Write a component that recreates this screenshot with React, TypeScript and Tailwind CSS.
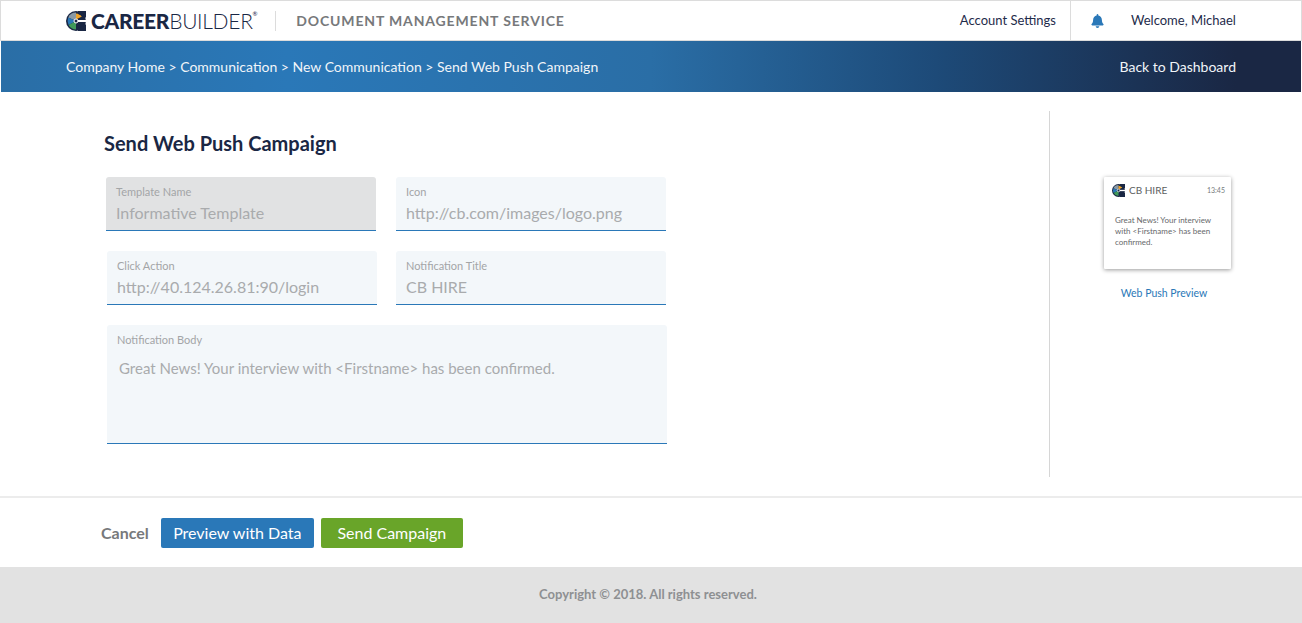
import { ReactNode } from 'react'

function LogoMark({ size }: { size: number }) {
  return (
    <svg width={size} height={size} viewBox="0 0 20 20" className="shrink-0">
      <circle cx="10" cy="10" r="10" fill="#1a2744" />
      <path d="M10 10 L10 1.5 A8.5 8.5 0 0 0 2.2 6.6 Z" fill="#8a9aa5" />
      <path d="M10 10 L2.2 6.6 A8.5 8.5 0 0 0 2.6 14 Z" fill="#2a78b8" />
      <path d="M10 10 L2.6 14 A8.5 8.5 0 0 0 10 18.5 Z" fill="#3f9a5a" />
      <path d="M10 2.5 A7.5 7.5 0 0 1 16 5.5 L10 8.5 Z" fill="#f0a428" />
      <path d="M20 0 H12 V3 A7 7 0 0 1 16.6 6.5 H20 Z" fill="#1a2744" />
      <path d="M20 20 H12 V17 A7 7 0 0 0 16.6 13.5 H20 Z" fill="#1a2744" />
      <rect x="9" y="9" width="11" height="2" fill="#fff" />
      <circle cx="10" cy="10" r="2" fill="#1a2744" stroke="#fff" strokeWidth="1" />
    </svg>
  )
}

function Field({ label, value, gray, className }: { label: string; value: string; gray?: boolean; className: string }) {
  return (
    <div className={`h-[54px] rounded-t-[3px] border-b border-[#2a78b8] pl-[10px] pt-[8px] ${gray ? 'bg-[#e1e2e3]' : 'bg-[#f3f7fa]'} ${className}`}>
      <div className="text-[11px] leading-[14px] text-[#a3a5a7]">{label}</div>
      <div className="mt-[4px] text-[16px] leading-[20px] text-[#a9abad]">{value}</div>
    </div>
  )
}

function Btn({ color, children, className }: { color: string; children: ReactNode; className: string }) {
  return (
    <button className={`h-[30px] rounded-[2px] text-[16px] leading-[30px] text-white ${color} ${className}`}>{children}</button>
  )
}

export default function App() {
  return (
    <div className="flex h-[623px] w-[1302px] flex-col overflow-hidden bg-white font-['Lato','Open_Sans',sans-serif]">
      <header className="flex h-[41px] shrink-0 items-center border-x border-t border-b border-[#dcdcdc] pl-[65px]">
        <LogoMark size={20} />
        <div className="ml-[5px] flex items-start text-[21px] leading-[24px] tracking-[-0.3px] text-[#1a2744]">
          <span className="font-black">CAREER</span>
          <span className="font-light">BUILDER</span>
          <span className="text-[6px] leading-[10px]">®</span>
        </div>
        <div className="ml-[18px] h-[20px] w-px bg-[#dcdcdc]" />
        <div className="ml-[20px] text-[14px] font-bold tracking-[0.85px] text-[#77797b]">DOCUMENT MANAGEMENT SERVICE</div>
        <div className="ml-auto text-[13px] text-[#1f2c4b]">Account Settings</div>
        <div className="ml-[14px] flex h-full w-[231px] items-center border-l border-[#dcdcdc] pl-[20px]">
          <svg width="13" height="14" viewBox="0 0 448 512" fill="#2a78b8">
            <path d="M224 512c35.3 0 64-28.7 64-64H160c0 35.3 28.7 64 64 64zm215.4-149.7c-19.3-20.8-55.5-52-55.5-154.3 0-77.7-54.5-139.9-127.9-155.2V32c0-17.7-14.3-32-32-32s-32 14.3-32 32v20.8C118.6 68.1 64.100 130.300 64.100 208c0 102.300-36.200 133.500-55.500 154.300-6 6.500-8.700 14.200-8.600 21.700.1 16.400 13 32 32.100 32h383.800c19.100 0 32-15.600 32.100-32 .1-7.500-2.600-15.200-8.600-21.700z" />
          </svg>
          <span className="ml-[27px] text-[13px] text-[#1f2c4b]">Welcome, Michael</span>
        </div>
      </header>

      <div className="flex h-[51px] shrink-0 items-center justify-between border-x border-white bg-[linear-gradient(90deg,#2a6ea6_0%,#2a78b8_22%,#2a6ea6_50%,#1d4a78_72%,#1a2744_95%)] pl-[65px] pr-[65px] text-[14px] text-[#f1f5f9]">
        <div>Company Home &gt; Communication &gt; New Communication &gt; Send Web Push Campaign</div>
        <div>Back to Dashboard</div>
      </div>

      <main className="flex h-[406px] shrink-0 border-b-2 border-[#ececec] pt-[19px]">
        <div className="w-[1049px] shrink-0 pl-[104px]">
          <h1 className="mt-[19px] text-[20px] font-bold leading-[26px] text-[#1a2744]">Send Web Push Campaign</h1>
          <div className="mt-[21px] flex pl-[2px]">
            <Field gray label="Template Name" value="Informative Template" className="w-[270px]" />
            <Field label="Icon" value="http://cb.com/images/logo.png" className="ml-[20px] w-[270px]" />
          </div>
          <div className="mt-[20px] flex pl-[3px]">
            <Field label="Click Action" value="http://40.124.26.81:90/login" className="w-[270px]" />
            <Field label="Notification Title" value="CB HIRE" className="ml-[19px] w-[270px]" />
          </div>
          <div className="ml-[3px] mt-[20px] h-[119px] w-[560px] rounded-t-[3px] border-b border-[#2a78b8] bg-[#f3f7fa] pl-[10px] pt-[8px]">
            <div className="text-[11px] leading-[14px] text-[#a3a5a7]">Notification Body</div>
            <div className="ml-[2px] mt-[11px] text-[15px] leading-[20px] text-[#a9abad]">Great News! Your interview with &lt;Firstname&gt; has been confirmed.</div>
          </div>
        </div>
        <aside className="h-[366px] w-[253px] border-l border-[#d6d6d6] pl-[54px] pt-[66px]">
          <div className="h-[92px] w-[127px] rounded-[1px] bg-white pl-[8px] pr-[6px] pt-[6px] shadow-[0_1px_4px_rgba(0,0,0,0.4)]">
            <div className="flex items-center">
              <LogoMark size={13} />
              <span className="ml-[4px] text-[10px] text-[#5c5e60]">CB HIRE</span>
              <span className="ml-auto text-[7px] text-[#77797b]">13:45</span>
            </div>
            <div className="ml-[3px] mt-[17px] text-[8px] leading-[11px] text-[#66686a]">Great News! Your interview with &lt;Firstname&gt; has been confirmed.</div>
          </div>
          <div className="mt-[17px] w-[120px] text-center text-[10.5px] leading-[14px] text-[#2a78b8]">Web Push Preview</div>
        </aside>
      </main>

      <div className="flex h-[69px] shrink-0 items-center pl-[101px]">
        <span className="text-[16px] font-bold text-[#77797b]">Cancel</span>
        <Btn color="bg-[#2a78b8]" className="ml-[12px] w-[153px]">Preview with Data</Btn>
        <Btn color="bg-[#69a529]" className="ml-[7px] w-[142px]">Send Campaign</Btn>
      </div>

      <footer className="flex flex-1 items-center justify-center bg-[#e2e2e2] pr-[6px] text-[13px] font-bold text-[#8e9092]">
        Copyright © 2018. All rights reserved.
      </footer>
    </div>
  )
}
